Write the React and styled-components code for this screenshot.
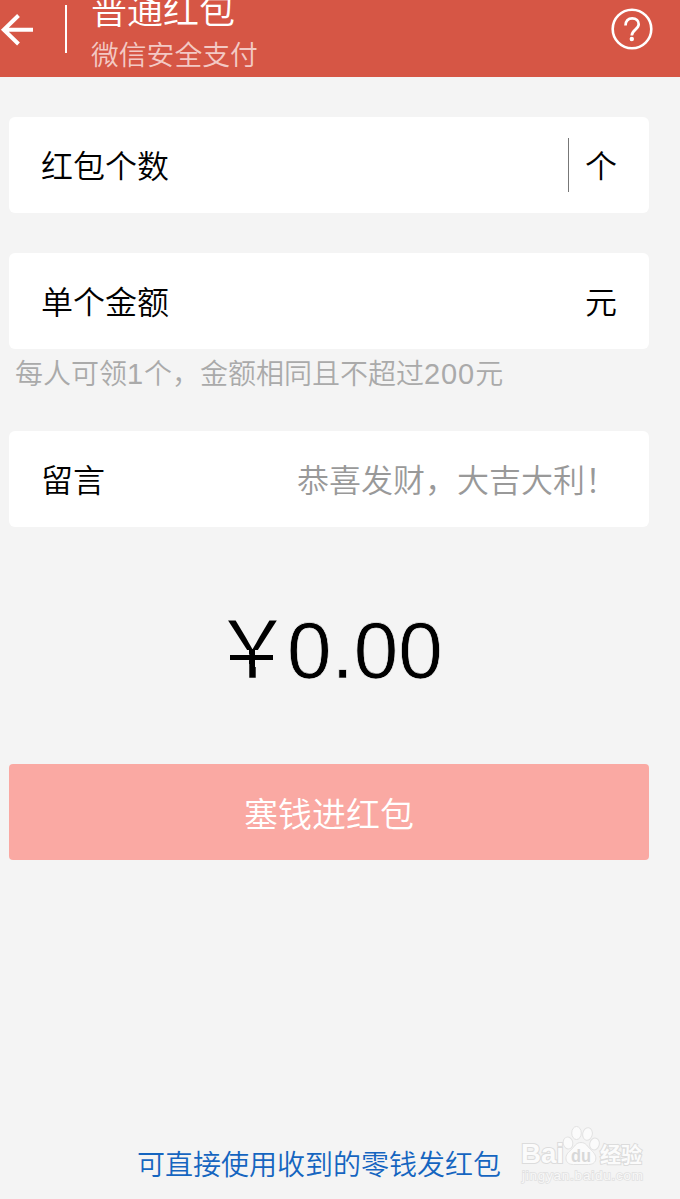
import React, { useState } from 'react'
import styled, { createGlobalStyle } from 'styled-components'

const GlobalStyle = createGlobalStyle`
  * {
    box-sizing: border-box;
  }
  body {
    margin: 0;
    background: #f4f4f4;
    font-family: "Liberation Sans", "Noto Sans CJK SC", sans-serif;
    font-weight: 350;
  }
`
const Page = styled.div`
  position: relative;
  width: 680px;
  height: 1199px;
  display: flex;
  flex-direction: column;
  overflow: hidden;
  background: #f4f4f4;
`
const Header = styled.header`
  height: 77px;
  flex: none;
  display: flex;
  align-items: flex-start;
  background: #d65645;
  color: #fff;
  overflow: hidden;
`
const BackIcon = styled.svg`
  width: 34px;
  height: 34px;
  margin-top: 13px;
`
const Divider = styled.div`
  width: 2px;
  height: 48px;
  margin: 5px 24px 0 31px;
  background: #fff;
`
const Titles = styled.div`
  flex: 1;
  margin-top: -10px;
`
const Title = styled.div`
  font-size: 36px;
  line-height: 44px;
`
const SubTitle = styled.div`
  margin-top: 4px;
  font-size: 27.8px;
  line-height: 36px;
  color: #f3c9c4;
`
const HelpIcon = styled.svg`
  width: 42px;
  height: 42px;
  margin: 8px 27px 0 0;
`
const Content = styled.main`
  width: 640px;
  margin: 40px 0 0 9px;
  flex: 1;
  display: flex;
  flex-direction: column;
`
const Field = styled.div`
  height: 96px;
  flex: none;
  margin-bottom: ${props => props.$gap || '0'};
  padding: 0 32px;
  display: flex;
  align-items: center;
  justify-content: space-between;
  border-radius: 6px;
  background: #fff;
  color: #000;
  font-size: 32px;
  line-height: 48px;
`
const Label = styled.span`
  padding-top: 3px;
`
const Unit = styled.div`
  display: flex;
  align-items: center;
`
const Cursor = styled.div`
  width: 1px;
  height: 54px;
  margin-right: 16px;
  background: #777;
`
const Placeholder = styled.span`
  width: 320px;
  padding-top: 3px;
  color: #999;
  white-space: nowrap;
`
const Hint = styled.div`
  height: 82px;
  flex: none;
  padding: 5px 0 0 6px;
  font-size: 28px;
  line-height: 40px;
  color: #aaa;
  white-space: nowrap;
`
const Digits = styled.span`
  font-size: 29px;
  letter-spacing: 0.9px;
`
const Amount = styled.div`
  height: 237px;
  flex: none;
  padding: 77px 0 0 204px;
  display: flex;
  align-items: flex-start;
  color: #000;
`
/* the yen sign carries one bar: the side strokes are covered and a single one drawn */
const Sign = styled.span`
  position: relative;
  width: 74px;
  font-family: "Noto Sans CJK SC", sans-serif;
  font-size: 79px;
  line-height: 79px;
  white-space: nowrap;

  &::after {
    content: '';
    position: absolute;
    left: 15px;
    top: 46px;
    width: 49px;
    height: 17px;
    background:
      linear-gradient(#000, #000) 2px 5px / 43px 5px no-repeat,
      linear-gradient(90deg, #f4f4f4 21px, transparent 21px 27.5px, #f4f4f4 27.5px);
  }
`
const Total = styled.span`
  font-size: 80px;
  line-height: 94px;
  -webkit-text-stroke: 0.7px #f4f4f4;
`
const PayButton = styled.button`
  height: 96px;
  flex: none;
  padding: 0;
  border: none;
  border-radius: 4px;
  background: #faa9a3;
  color: #fff;
  font-family: inherit;
  font-weight: inherit;
  font-size: 34px;
`
const ChangeLink = styled.a`
  margin: auto 0 12px;
  padding-left: 128px;
  font-size: 28px;
  line-height: 42px;
  color: #1565c0;
`
const Watermark = styled.svg`
  position: absolute;
  left: 516px;
  top: 1120px;
  width: 136px;
  height: 68px;
`

const Paw = () => (
  <g fill="#fbfbfb" stroke="#e2e2e2" strokeWidth="1">
    <ellipse cx="52" cy="23" rx="4.8" ry="6" transform="rotate(-12 52 23)" />
    <ellipse cx="60.5" cy="13" rx="4.8" ry="6.5" />
    <ellipse cx="71.5" cy="14" rx="4.8" ry="6.3" transform="rotate(12 71.5 14)" />
    <ellipse cx="78.5" cy="24" rx="4.8" ry="6" transform="rotate(15 78.5 24)" />
    <path d="M65 22.500c-5 0-6.500 4-9.500 7-3.500 3-6 5.500-5.500 9.500.5 4 3.500 5.500 7.500 5.500h15c4 0 7-2 7.300-5.500.3-4-2-6.500-5.300-9.500-3-3-4.500-7-9.500-7z" />
  </g>
)

const App = () => {
  const [total] = useState(0)

  return (
    <>
      <GlobalStyle />
      <Page>
        <Header>
          <BackIcon viewBox="0 0 34 34" fill="none" stroke="#fff" strokeWidth="4">
            <path d="M18.500 2.500 3.800 16.800l14.700 14.200M3.800 16.800H33" />
          </BackIcon>
          <Divider />
          <Titles>
            <Title>普通红包</Title>
            <SubTitle>微信安全支付</SubTitle>
          </Titles>
          <HelpIcon viewBox="0 0 42 42" fill="none" stroke="#fff">
            <circle cx="21" cy="21" r="19.300" strokeWidth="2.600" />
            <path d="M14.500 17.500c0-4.500 2.700-7.200 6.700-7.200s6.500 2.600 6.500 6c0 5.200-6.900 5.500-6.900 11.200" strokeWidth="2.700" />
            <circle cx="20.800" cy="31" r="2.200" fill="#fff" stroke="none" />
          </HelpIcon>
        </Header>
        <Content>
          <Field $gap="40px">
            <Label>红包个数</Label>
            <Unit>
              <Cursor />
              <Label>个</Label>
            </Unit>
          </Field>
          <Field>
            <Label>单个金额</Label>
            <Label>元</Label>
          </Field>
          <Hint>每人可领<Digits>1</Digits>个，金额相同且不超过<Digits>200</Digits>元</Hint>
          <Field>
            <Label>留言</Label>
            <Placeholder>恭喜发财，大吉大利！</Placeholder>
          </Field>
          <Amount>
            <Sign>￥</Sign>
            <Total>{total.toFixed(2)}</Total>
          </Amount>
          <PayButton>塞钱进红包</PayButton>
          <ChangeLink>可直接使用收到的零钱发红包</ChangeLink>
        </Content>
        <Watermark viewBox="0 0 136 68">
          <g fill="#fbfbfb" stroke="#dcdcdc" strokeWidth="2" paintOrder="stroke" fontWeight="bold">
            <text x="5" y="43" fontSize="27" textLength="43" lengthAdjust="spacingAndGlyphs">Bai</text>
            <text x="84" y="42" fontSize="21" textLength="42">经验</text>
          </g>
          <Paw />
          <text x="55" y="42" fontSize="18" fontWeight="bold" fill="#d8d8d8" textLength="20" lengthAdjust="spacingAndGlyphs">du</text>
          <text x="6" y="60" fontSize="13.5" fill="#f8f8f8" stroke="#e0e0e0" strokeWidth="1.500" paintOrder="stroke" textLength="121">jingyan.baidu.com</text>
        </Watermark>
      </Page>
    </>
  )
}

export default App
